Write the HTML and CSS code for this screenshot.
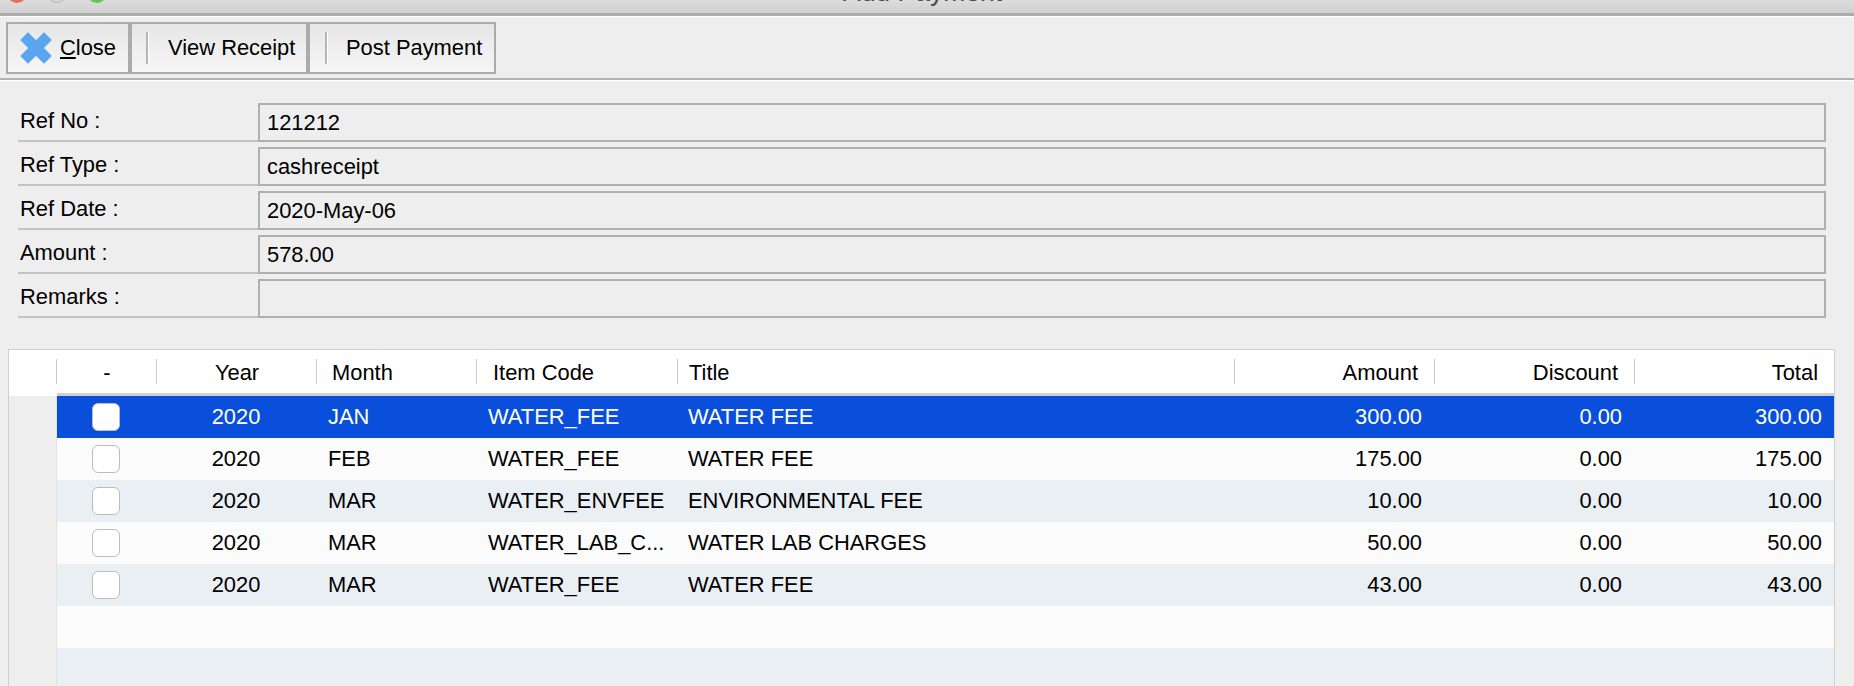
FILE: index.html
```html
<!DOCTYPE html>
<html lang="en">
<head>
    <meta charset="UTF-8">
    <title>Add Payment</title>
    <link rel="stylesheet" href="styles.css">
</head>
<body>

    <div class="titlebar">
        <div class="lights">
            <span class="light red"></span>
            <span class="light gray"></span>
            <span class="light green"></span>
        </div>
        <div class="title">Add Payment</div>
        <div></div>
    </div>

    <div class="toolbar">
        <button class="tool close-btn">
            <svg class="close-icon" width="32" height="32" viewBox="0 0 32 32">
                <path d="M8 8 L24 24 M24 8 L8 24" stroke="#5aa6ee" stroke-width="11" stroke-linecap="square" fill="none"/>
            </svg>
            <span><u>C</u>lose</span>
        </button>
        <button class="tool view-btn"><i class="sep"></i><span>View Receipt</span></button>
        <button class="tool post-btn"><i class="sep"></i><span>Post Payment</span></button>
    </div>

    <div class="form">
        <div class="row"><label>Ref No :</label><div class="field">121212</div></div>
        <div class="row"><label>Ref Type :</label><div class="field">cashreceipt</div></div>
        <div class="row"><label>Ref Date :</label><div class="field">2020-May-06</div></div>
        <div class="row"><label>Amount :</label><div class="field">578.00</div></div>
        <div class="row"><label>Remarks :</label><div class="field"></div></div>
    </div>

    <div class="grid-wrap">
        <table class="grid">
            <colgroup>
                <col class="c-gutter">
                <col class="c-check">
                <col class="c-year">
                <col class="c-month">
                <col class="c-code">
                <col class="c-title">
                <col class="c-num">
                <col class="c-num">
                <col class="c-num">
            </colgroup>
            <thead>
                <tr>
                    <th class="gutter"></th>
                    <th><div class="mid">-</div></th>
                    <th><div class="mid">Year</div></th>
                    <th><div class="pad-month">Month</div></th>
                    <th><div class="pad-code">Item Code</div></th>
                    <th><div class="pad-title">Title</div></th>
                    <th><div class="right">Amount</div></th>
                    <th><div class="right">Discount</div></th>
                    <th><div class="right">Total</div></th>
                </tr>
            </thead>
            <tbody id="rows"></tbody>
        </table>
    </div>

    <script>
        const items = [
            ["JAN", "WATER_FEE", "WATER FEE", "300.00", "0.00", "300.00"],
            ["FEB", "WATER_FEE", "WATER FEE", "175.00", "0.00", "175.00"],
            ["MAR", "WATER_ENVFEE", "ENVIRONMENTAL FEE", "10.00", "0.00", "10.00"],
            ["MAR", "WATER_LAB_C...", "WATER LAB CHARGES", "50.00", "0.00", "50.00"],
            ["MAR", "WATER_FEE", "WATER FEE", "43.00", "0.00", "43.00"]
        ];

        const body = document.getElementById("rows");

        items.forEach((item, index) => {
            const row = body.insertRow();
            if (index === 0) row.className = "selected";
            row.innerHTML = `<td class="gutter"></td><td><div class="check"></div></td><td class="mid">2020</td><td class="left">${item[0]}</td><td class="left">${item[1]}</td><td class="left">${item[2]}</td><td class="num">${item[3]}</td><td class="num">${item[4]}</td><td class="num">${item[5]}</td>`;
        });

        // empty rows fill the rest of the grid
        for (let i = 0; i < 2; i++) {
            const row = body.insertRow();
            row.innerHTML = `<td class="gutter"></td><td colspan="8"></td>`;
        }
    </script>

</body>
</html>
```

FILE: styles.css
```css
html, body {
    margin: 0;
    height: 686px;
    overflow: hidden;
}
body {
    font-family: "Liberation Sans", Arial, sans-serif;
    font-size: 21.9px;
    color: #000;
    background-color: #eeeeee;
}

/* window title, cut off by the top of the picture */
.titlebar {
    display: grid;
    grid-template-columns: 1fr auto 1fr;
    height: 16px;
    box-sizing: border-box;
    overflow: hidden;
    background: linear-gradient(#dcdcdc, #d0d0d0);
    border-bottom: 3px solid #ababab;
    box-shadow: 0 1px 0 #fff;
}
.lights {
    display: flex;
    gap: 20px;
    margin: -17px 0 0 7px;
}
.light {
    width: 20px;
    height: 20px;
    border-radius: 50%;
}
.red { background-color: #ec6a5e; }
.gray { background-color: #d6d6d6; border: 1px solid #b8b8b8; box-sizing: border-box; }
.green { background-color: #61c554; }
.title {
    margin-top: -24px;
    padding-right: 9px;
    font-size: 26.5px;
    line-height: 32px;
    color: #4b4b4b;
}

.toolbar {
    display: flex;
    height: 64px;
    box-sizing: border-box;
    padding: 6px 0 0 6px;
    border-bottom: 2px solid #b2b2b2;
    box-shadow: 0 1px 0 #fff;
}
.tool {
    display: flex;
    align-items: center;
    height: 52px;
    box-sizing: border-box;
    padding: 0;
    border: 2px solid #ababab;
    background: linear-gradient(#e6e6e6, #f6f6f6);
    font-family: inherit;
    font-size: 21.9px;
    color: #000;
}
.close-btn { width: 124px; }
.view-btn { width: 178px; }
.post-btn { width: 188px; }
.close-icon { margin: 0 8px 0 12px; }
.sep {
    width: 2px;
    height: 32px;
    margin: 0 19px 0 14px;
    background-color: #b5b5b5;
    border-right: 1px solid #fff;
}
.post-btn .sep { margin: 0 18px 0 15px; }

.form {
    display: flex;
    flex-direction: column;
    gap: 5px;
    margin: 23px 28px 0 18px;
}
.row {
    display: flex;
    height: 39px;
}
.row label {
    width: 240px;
    box-sizing: border-box;
    padding: 4px 0 0 2px;
    border-bottom: 2px solid #c2c2c2;
    line-height: 28px;
}
.field {
    flex: 1;
    box-sizing: border-box;
    padding-left: 7px;
    border: 2px solid #b0b0b0;
    line-height: 36px;
}

.grid-wrap {
    margin: 31px 19px 0 8px;
    border: 1px solid #cfcfcf;
}
.grid {
    width: 100%;
    table-layout: fixed;
    border-collapse: separate;
    border-spacing: 0;
}
.c-gutter { width: 48px; }
.c-check { width: 100px; }
.c-year { width: 160px; }
.c-month { width: 160px; }
.c-code { width: 200px; }
.c-num { width: 200px; }

.grid th {
    height: 46px;
    box-sizing: border-box;
    padding: 9px 0 0;
    vertical-align: top;
    text-align: left;
    font-weight: normal;
    background-color: #fff;
    border-bottom: 3px solid #cfcfcf;
}
.grid th div {
    height: 25px;
    margin-left: -1px;
    line-height: 27px;
    border-left: 1px solid #cccccc;
}
.grid th.gutter {
    border-bottom: none;
}
.grid th .mid { text-align: center; }
.grid th .pad-month { padding-left: 15px; }
.grid th .pad-code { padding-left: 16px; }
.grid th .pad-title { margin-left: 0; padding-left: 11px; }
.grid th .right { margin-left: 0; text-align: right; padding-right: 16px; }

.grid td {
    height: 42px;
    padding: 0;
    background-color: #fbfbfb;
}
.grid tr:nth-child(odd) td { background-color: #eaeff4; }
.grid td.gutter,
.grid tr:nth-child(odd) td.gutter {
    background-color: #eeeeee;
    border-right: 1px solid #e2e2e2;
}
.grid td.mid { text-align: center; padding-right: 2px; }
.grid td.left { padding-left: 11px; white-space: nowrap; }
.grid td.num { text-align: right; padding-right: 12px; }
.grid tr.selected td { background-color: #0a4fdb; color: #fff; }
.grid tr.selected td.gutter { background-color: #eeeeee; }
.check {
    width: 28px;
    height: 28px;
    box-sizing: border-box;
    margin-left: 35px;
    background-color: #fff;
    border: 1px solid #bcbcbc;
    border-radius: 6px;
}
```
